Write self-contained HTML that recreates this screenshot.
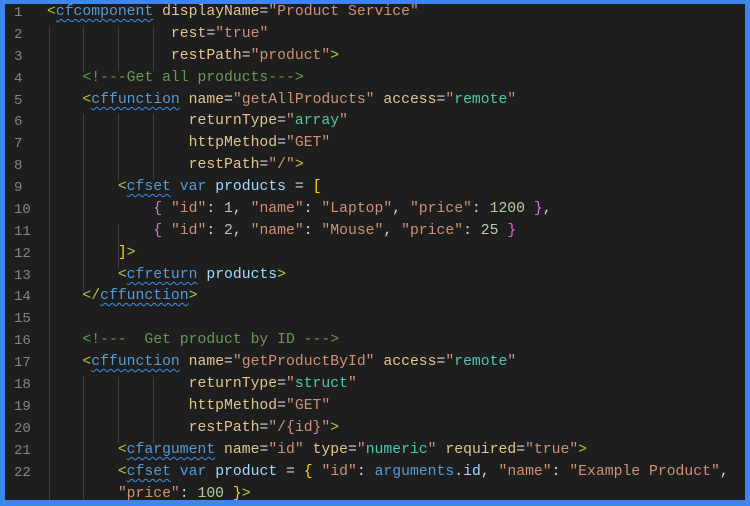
<!DOCTYPE html>
<html><head><meta charset="utf-8"><style>
html,body{margin:0;padding:0;}
body{width:750px;height:506px;background:#3d86f0;position:relative;overflow:hidden;}
#ed{position:absolute;left:5px;top:4px;width:740px;height:496px;background:#1e1e1e;overflow:hidden;}
.ln{position:absolute;left:9px;width:30px;color:#858585;font:14px "Liberation Mono",monospace;}
.c{position:absolute;left:42px;white-space:pre;font:14.75px "Liberation Mono",monospace;color:#d4d4d4;}
.g{position:absolute;width:1px;background:#404040;}
.b{color:#b5c93a}.t{color:#569cd6;text-decoration:underline wavy #3b8eea;text-decoration-thickness:1px;text-underline-offset:3px}
.a{color:#e2c58c}.s{color:#ce9178}.e{color:#4ec9b0}.cm{color:#6a9955}
.k{color:#569cd6}.v{color:#9cdcfe}.n{color:#b5cea8}.y{color:#ffd700}.p{color:#da70d6}
</style></head><body><div id="ed">
<div class="g" style="left:44px;top:23px;height:480px"></div>
<div class="g" style="left:78px;top:23px;height:44px"></div>
<div class="g" style="left:113px;top:23px;height:44px"></div>
<div class="g" style="left:148px;top:23px;height:44px"></div>
<div class="g" style="left:78px;top:110px;height:177px"></div>
<div class="g" style="left:113px;top:110px;height:66px"></div>
<div class="g" style="left:148px;top:110px;height:66px"></div>
<div class="g" style="left:113px;top:220px;height:44px"></div>
<div class="g" style="left:78px;top:373px;height:130px"></div>
<div class="g" style="left:113px;top:373px;height:66px"></div>
<div class="g" style="left:148px;top:373px;height:66px"></div>

<div class="ln" style="top:1px">1</div><div class="c" style="top:0px"><span class="b">&lt;</span><span class="t">cfcomponent</span> <span class="a">displayName</span>=<span class="s">"Product Service"</span></div>
<div class="ln" style="top:23px">2</div><div class="c" style="top:22px">              <span class="a">rest</span>=<span class="s">"true"</span></div>
<div class="ln" style="top:45px">3</div><div class="c" style="top:44px">              <span class="a">restPath</span>=<span class="s">"product"</span><span class="b">&gt;</span></div>
<div class="ln" style="top:67px">4</div><div class="c cm" style="top:66px">    &lt;!---Get all products---&gt;</div>
<div class="ln" style="top:89px">5</div><div class="c" style="top:88px">    <span class="b">&lt;</span><span class="t">cffunction</span> <span class="a">name</span>=<span class="s">"getAllProducts"</span> <span class="a">access</span>=<span class="s">"</span><span class="e">remote</span><span class="s">"</span></div>
<div class="ln" style="top:110px">6</div><div class="c" style="top:109px">                <span class="a">returnType</span>=<span class="s">"</span><span class="e">array</span><span class="s">"</span></div>
<div class="ln" style="top:132px">7</div><div class="c" style="top:131px">                <span class="a">httpMethod</span>=<span class="s">"GET"</span></div>
<div class="ln" style="top:154px">8</div><div class="c" style="top:153px">                <span class="a">restPath</span>=<span class="s">"/"</span><span class="b">&gt;</span></div>
<div class="ln" style="top:176px">9</div><div class="c" style="top:175px">        <span class="b">&lt;</span><span class="t">cfset</span> <span class="k">var</span> <span class="v">products</span> = <span class="y">[</span></div>
<div class="ln" style="top:198px">10</div><div class="c" style="top:197px">            <span class="p">{</span> <span class="s">"id"</span>: <span class="n">1</span>, <span class="s">"name"</span>: <span class="s">"Laptop"</span>, <span class="s">"price"</span>: <span class="n">1200</span> <span class="p">}</span>,</div>
<div class="ln" style="top:220px">11</div><div class="c" style="top:219px">            <span class="p">{</span> <span class="s">"id"</span>: <span class="n">2</span>, <span class="s">"name"</span>: <span class="s">"Mouse"</span>, <span class="s">"price"</span>: <span class="n">25</span> <span class="p">}</span></div>
<div class="ln" style="top:242px">12</div><div class="c" style="top:241px">        <span class="y">]</span><span class="b">&gt;</span></div>
<div class="ln" style="top:264px">13</div><div class="c" style="top:263px">        <span class="b">&lt;</span><span class="t">cfreturn</span> <span class="v">products</span><span class="b">&gt;</span></div>
<div class="ln" style="top:285px">14</div><div class="c" style="top:284px">    <span class="b">&lt;/</span><span class="t">cffunction</span><span class="b">&gt;</span></div>
<div class="ln" style="top:307px">15</div>
<div class="ln" style="top:329px">16</div><div class="c cm" style="top:328px">    &lt;!---  Get product by ID ---&gt;</div>
<div class="ln" style="top:351px">17</div><div class="c" style="top:350px">    <span class="b">&lt;</span><span class="t">cffunction</span> <span class="a">name</span>=<span class="s">"getProductById"</span> <span class="a">access</span>=<span class="s">"</span><span class="e">remote</span><span class="s">"</span></div>
<div class="ln" style="top:373px">18</div><div class="c" style="top:372px">                <span class="a">returnType</span>=<span class="s">"</span><span class="e">struct</span><span class="s">"</span></div>
<div class="ln" style="top:395px">19</div><div class="c" style="top:394px">                <span class="a">httpMethod</span>=<span class="s">"GET"</span></div>
<div class="ln" style="top:417px">20</div><div class="c" style="top:416px">                <span class="a">restPath</span>=<span class="s">"/{id}"</span><span class="b">&gt;</span></div>
<div class="ln" style="top:439px">21</div><div class="c" style="top:438px">        <span class="b">&lt;</span><span class="t">cfargument</span> <span class="a">name</span>=<span class="s">"id"</span> <span class="a">type</span>=<span class="s">"</span><span class="e">numeric</span><span class="s">"</span> <span class="a">required</span>=<span class="s">"true"</span><span class="b">&gt;</span></div>
<div class="ln" style="top:461px">22</div><div class="c" style="top:460px">        <span class="b">&lt;</span><span class="t">cfset</span> <span class="k">var</span> <span class="v">product</span> = <span class="y">{</span> <span class="s">"id"</span>: <span class="k">arguments</span>.<span class="v">id</span>, <span class="s">"name"</span>: <span class="s">"Example Product"</span>,</div>
<div class="c" style="top:482px">        <span class="s">"price"</span>: <span class="n">100</span> <span class="y">}</span><span class="b">&gt;</span></div>
</div></body></html>
